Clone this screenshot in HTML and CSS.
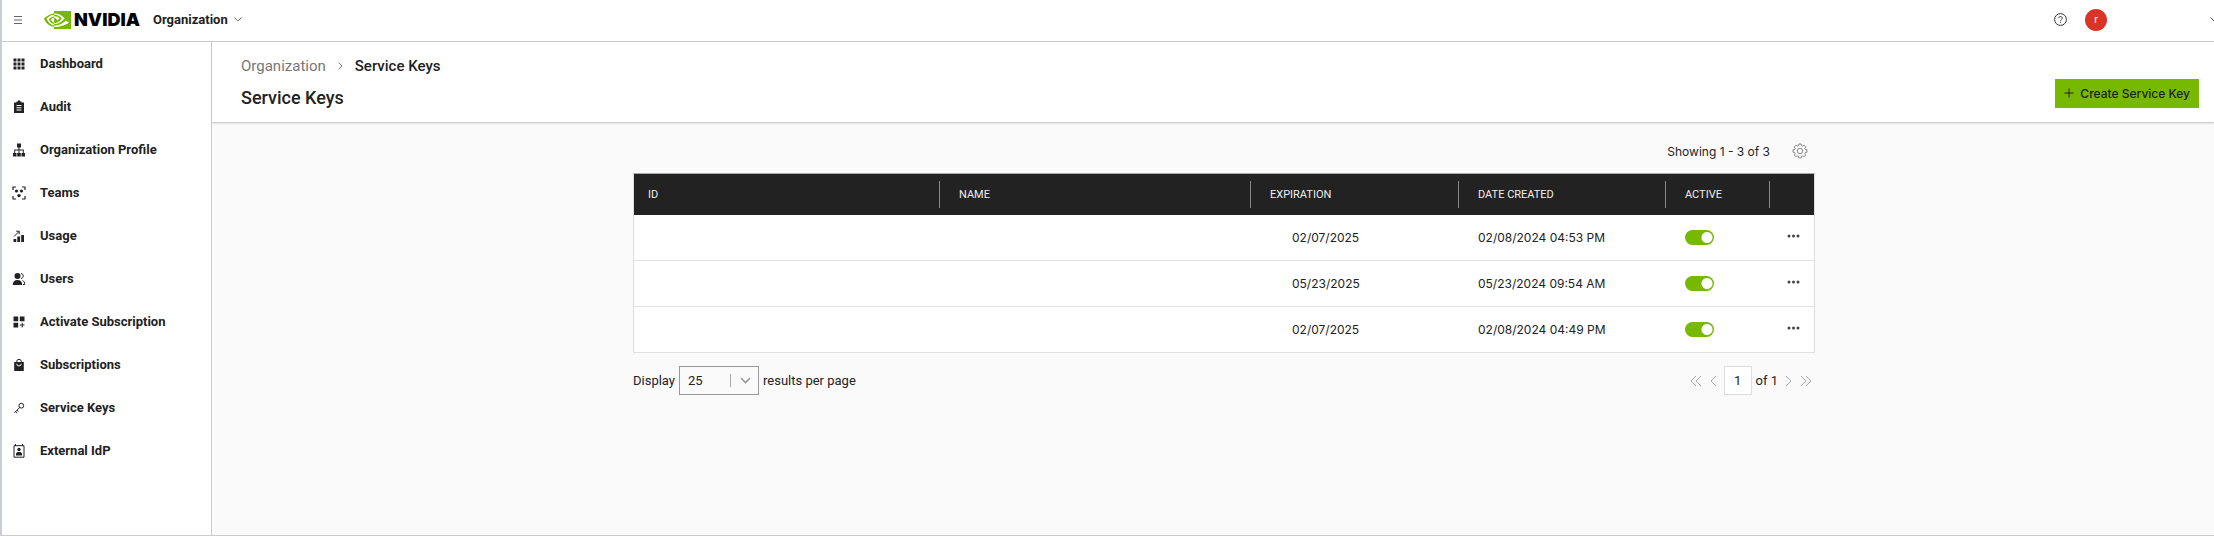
FILE: index.html
```html
<!DOCTYPE html>
<html lang="en">
<head>
<meta charset="utf-8">
<title>Service Keys</title>
<link rel="stylesheet" href="styles.css">
</head>
<body>
<div class="app">
  <header class="topbar">
    <button class="icon-btn menu-btn" type="button" aria-label="Toggle menu">
      <svg width="10" height="10" viewBox="0 0 10 10" fill="none" stroke="#666" stroke-width="1"><path d="M1 1.5h8M1 5h8M1 8.5h8"/></svg>
    </button>
    <a class="brand" href="#" aria-label="NVIDIA home">
      <svg width="27" height="18" viewBox="0 4.063 24 15.874" fill="#76b900"><path d="M8.948 8.798v-1.43a6.7 6.7 0 0 1 .424-.018c3.922-.124 6.493 3.374 6.493 3.374s-2.774 3.851-5.75 3.851c-.398 0-.787-.062-1.158-.185v-4.346c1.528.185 1.837.857 2.747 2.385l2.04-1.714s-1.492-1.952-4-1.952a6.016 6.016 0 0 0-.796.035m0-4.735v2.138l.424-.027c5.45-.185 9.01 4.47 9.01 4.47s-4.08 4.964-8.33 4.964c-.37 0-.733-.035-1.095-.097v1.325c.3.035.61.062.91.062 3.957 0 6.82-2.023 9.593-4.408.459.371 2.34 1.263 2.73 1.652-2.633 2.208-8.772 3.984-12.253 3.984-.335 0-.653-.018-.971-.053v1.864H24V4.063zm0 10.326v1.131c-3.657-.654-4.673-4.46-4.673-4.46s1.758-1.944 4.673-2.262v1.237H8.94c-1.528-.186-2.73 1.245-2.73 1.245s.68 2.412 2.739 3.11M2.456 10.9s2.164-3.197 6.5-3.533V6.201C4.153 6.59 0 10.653 0 10.653s2.35 6.802 8.948 7.42v-1.237c-4.84-.6-6.492-5.936-6.492-5.936z"/></svg>
      <span class="wordmark">NVIDIA</span>
    </a>
    <button class="org-btn" type="button">Organization
      <svg width="8" height="5" viewBox="0 0 8 5" fill="none" stroke="#777" stroke-width="1"><path d="M.5.5 4 4 7.5.5"/></svg>
    </button>
    <div class="top-actions">
      <button class="icon-btn" type="button" aria-label="Help">
        <svg width="13" height="13" viewBox="0 0 13 13" fill="none" stroke="#333" stroke-width="1"><circle cx="6.5" cy="6.5" r="5.9"/><path d="M4.8 5.2c0-1 .7-1.7 1.7-1.7s1.8.6 1.8 1.6c0 1.300-1.700 1.300-1.700 2.600M6.600 8.700v1.100"/></svg>
      </button>
      <button class="avatar" type="button">r</button>
      <button class="icon-btn account-btn" type="button" aria-label="Account menu">
        <svg width="8" height="5" viewBox="0 0 8 5" fill="none" stroke="#555" stroke-width="1"><path d="M.5.5 4 4 7.500.5"/></svg>
      </button>
    </div>
  </header>
  <div class="body">
    <nav class="sidebar">
      <a href="#"><svg viewBox="0 0 14 14"><path d="M1.500 1.500h3v3h-3zM5.500 1.500h3v3h-3zM9.500 1.500h3v3h-3zM1.500 5.500h3v3h-3zM5.500 5.500h3v3h-3zM9.500 5.500h3v3h-3zM1.500 9.500h3v3h-3zM5.500 9.500h3v3h-3zM9.500 9.500h3v3h-3z"/></svg>Dashboard</a>
      <a href="#"><svg viewBox="0 0 14 14"><path fill-rule="evenodd" d="M2 2.500h2.500V1.500h1.300a1.200 1.200 0 0 1 2.400 0h1.300v1H12V13H2zM4.500 5h5v1h-5zM4.500 7.200h5v1h-5zM4.500 9.500h5v1h-5z"/></svg>Audit</a>
      <a href="#"><svg viewBox="0 0 14 14"><path d="M5 .5h4v4H7.500v2h4.300V10H13v3.500H9.500V10h1.300V7.500H7.500V10h1.300v3.500H5.200V10h1.300V7.500H3.200V10h1.300v3.500H1V10h1.200V6.500h4.300v-2H5z"/></svg>Organization Profile</a>
      <a href="#"><svg viewBox="0 0 14 14"><path d="M1 4V1h3M10 1h3v3M13 10v3h-3M4 13H1v-3" fill="none" stroke="#222" stroke-width="1.200"/><circle cx="4.500" cy="5" r="1.600"/><circle cx="9.500" cy="5" r="1.600"/><circle cx="7" cy="9.600" r="1.700"/></svg>Teams</a>
      <a href="#"><svg viewBox="0 0 14 14"><path d="M1.500 10h2.800v3H1.500zM5.300 7.500h2.800V13H5.300zM9.200 6h2.800v7H9.200z"/><path d="M2 7.500 7 2.500M4.200 2.200h3v3" fill="none" stroke="#222"/></svg>Usage</a>
      <a href="#"><svg viewBox="0 0 14 14"><circle cx="5.500" cy="4" r="3"/><path d="M.8 13c0-3.500 1.700-5 4.700-5s4.700 1.500 4.700 5z"/><path d="M9 1.600c3 .2 3 4.400 0 4.900M10.500 8.500c1.500.5 2.200 2 2.200 4h-1.700" fill="none" stroke="#222"/></svg>Users</a>
      <a href="#"><svg viewBox="0 0 14 14"><path d="M1.500 1.500h4.700v4.700H1.500zM7.800 1.500h4.700v4.700H7.800zM1.500 7.800h4.700v4.700H1.500zM9.700 7.800h1v1.800h1.800v1h-1.800v1.900h-1v-1.900H7.800v-1h1.900z"/></svg>Activate Subscription</a>
      <a href="#"><svg viewBox="0 0 14 14"><path d="M2.200 4h9.600v9H2.200z"/><path d="M4.700 4.500V3.600a2.300 2.300 0 0 1 4.600 0v.9" fill="none" stroke="#222"/><path d="M4.800 5.800a2.200 2.200 0 0 0 4.400 0" fill="none" stroke="#fff"/></svg>Subscriptions</a>
      <a href="#"><svg viewBox="0 0 14 14"><path d="M7.800 6.400 2.500 11.700M3.500 10.700l1.700 1.500M5 9.200l1.400 1.300" fill="none" stroke="#222"/><circle cx="9.300" cy="4.700" r="2.400" fill="none" stroke="#222"/></svg>Service Keys</a>
      <a href="#"><svg viewBox="0 0 14 14"><path d="M2 1.700h10v11.500H2zM3.500 0v2M10.500 0v2" fill="none" stroke="#222"/><circle cx="7" cy="5.500" r="1.700"/><path d="M4 11.500V9.800C4 8.500 5.500 8 7 8s3 .5 3 1.800v1.700z"/></svg>External IdP</a>
    </nav>
    <main class="main">
      <div class="page-head">
        <div>
          <div class="crumbs">
            <a href="#">Organization</a>
            <svg width="5" height="8" viewBox="0 0 5 8" fill="none" stroke="#777"><path d="M.7.7 4 4 .7 7.300"/></svg>
            <span>Service Keys</span>
          </div>
          <h1>Service Keys</h1>
        </div>
        <button class="create-btn" type="button">
          <svg width="10" height="10" viewBox="0 0 10 10" fill="none" stroke="#222"><path d="M5 .5v9M.5 5h9"/></svg>
          Create Service Key
        </button>
      </div>
      <div class="content">
        <div class="toolbar">
          <span>Showing 1 - 3 of 3</span>
          <button class="icon-btn" type="button" aria-label="Table settings">
            <svg width="16" height="16" viewBox="0 0 16 16" fill="none" stroke="#888" stroke-width="1"><circle cx="8" cy="8" r="2.700"/><path d="M6.800 1h2.400l.3 1.700 1.200.5 1.400-1 1.700 1.700-1 1.400.5 1.200 1.700.3v2.400l-1.700.3-.5 1.200 1 1.400-1.700 1.700-1.400-1-1.200.5-.3 1.700H6.800l-.3-1.700-1.200-.5-1.400 1-1.700-1.700 1-1.400-.5-1.200L1 9.200V6.800l1.700-.3.5-1.200-1-1.400 1.700-1.700 1.400 1 1.200-.5z"/></svg>
          </button>
        </div>
        <table class="keys">
          <colgroup><col class="c-id"><col class="c-name"><col class="c-exp"><col class="c-date"><col class="c-active"><col class="c-more"></colgroup>
          <thead>
            <tr><th>ID</th><th>NAME</th><th>EXPIRATION</th><th>DATE CREATED</th><th>ACTIVE</th><th></th></tr>
          </thead>
          <tbody>
            <tr><td></td><td></td><td class="exp">02/07/2025</td><td>02/08/2024 04:53 PM</td><td><input class="toggle" type="checkbox" checked aria-label="Active, key 1"></td><td class="more"><button class="icon-btn" type="button" aria-label="Actions, key 1"><svg width="13" height="4" viewBox="0 0 13 4" fill="#444"><circle cx="2" cy="2" r="1.500"/><circle cx="6.500" cy="2" r="1.500"/><circle cx="11" cy="2" r="1.500"/></svg></button></td></tr>
            <tr><td></td><td></td><td class="exp">05/23/2025</td><td>05/23/2024 09:54 AM</td><td><input class="toggle" type="checkbox" checked aria-label="Active, key 2"></td><td class="more"><button class="icon-btn" type="button" aria-label="Actions, key 2"><svg width="13" height="4" viewBox="0 0 13 4" fill="#444"><circle cx="2" cy="2" r="1.500"/><circle cx="6.500" cy="2" r="1.500"/><circle cx="11" cy="2" r="1.500"/></svg></button></td></tr>
            <tr><td></td><td></td><td class="exp">02/07/2025</td><td>02/08/2024 04:49 PM</td><td><input class="toggle" type="checkbox" checked aria-label="Active, key 3"></td><td class="more"><button class="icon-btn" type="button" aria-label="Actions, key 3"><svg width="13" height="4" viewBox="0 0 13 4" fill="#444"><circle cx="2" cy="2" r="1.500"/><circle cx="6.500" cy="2" r="1.500"/><circle cx="11" cy="2" r="1.500"/></svg></button></td></tr>
          </tbody>
        </table>
        <div class="table-foot">
          <div class="page-size">
            <label for="size">Display</label>
            <div class="select-box">
              <select id="size"><option>25</option><option>50</option><option>100</option></select>
              <svg width="22" height="13" viewBox="0 0 22 13" fill="none"><path d="M.5 0v13" stroke="#aaa"/><path d="m11 4 4.500 4.500L20 4" stroke="#999" stroke-width="1.600"/></svg>
            </div>
            <span>results per page</span>
          </div>
          <div class="pager">
            <button class="icon-btn" type="button" aria-label="First page"><svg width="12" height="12" viewBox="0 0 12 12"><path d="M6 1 1 6l5 5M11 1 6 6l5 5"/></svg></button>
            <button class="icon-btn" type="button" aria-label="Previous page"><svg width="8" height="12" viewBox="0 0 8 12"><path d="M7 1 2 6l5 5"/></svg></button>
            <div class="page-num"><input id="page" type="text" value="1" aria-label="Page"><label for="page">of 1</label></div>
            <button class="icon-btn" type="button" aria-label="Next page"><svg width="8" height="12" viewBox="0 0 8 12"><path d="m1 1 5 5-5 5"/></svg></button>
            <button class="icon-btn" type="button" aria-label="Last page"><svg width="12" height="12" viewBox="0 0 12 12"><path d="m1 1 5 5-5 5M6 1l5 5-5 5"/></svg></button>
          </div>
        </div>
      </div>
    </main>
  </div>
</div>
</body>
</html>
```
FILE: styles.css
```css
* { box-sizing: border-box; }

body {
  margin: 0;
  background: #fff;
  color: #222;
  font-family: Roboto, "Liberation Sans", sans-serif;
  font-size: 13px;
}

button, input, select { font: inherit; color: inherit; }
a { color: inherit; text-decoration: none; }
svg { display: block; flex: none; }

.app {
  min-height: 100vh;
  display: flex;
  flex-direction: column;
  border-left: 2px solid #c9ced5;
  border-bottom: 1px solid #ccc;
}

.icon-btn {
  display: flex;
  padding: 0;
  border: 0;
  background: none;
}

.topbar {
  height: 42px;
  display: flex;
  align-items: center;
  padding-left: 11px;
  padding-bottom: 2px;
  border-bottom: 1px solid #ccc;
  overflow: hidden;
}

.brand {
  display: flex;
  align-items: center;
  gap: 3px;
  margin-left: 21px;
}

.wordmark {
  font-family: Inter, sans-serif;
  font-weight: 900;
  font-size: 18px;
  line-height: 18px;
  color: #000;
}

.org-btn {
  display: flex;
  align-items: center;
  gap: 6px;
  margin-left: 13px;
  padding: 0;
  border: 0;
  background: none;
  font-weight: 700;
}

.top-actions {
  display: flex;
  align-items: center;
  margin-left: auto;
}

.avatar {
  width: 22px;
  height: 22px;
  margin: 0 103px 0 18px;
  padding: 0;
  border: 0;
  border-radius: 50%;
  background: #dc3327;
  color: #fff;
  font-size: 11px;
  line-height: 22px;
}

.account-btn { margin-right: -4px; }

.body { flex: 1; display: flex; }

.sidebar {
  width: 210px;
  flex: none;
  border-right: 1px solid #ccc;
}

.sidebar a {
  display: flex;
  align-items: center;
  gap: 14px;
  height: 43px;
  padding-left: 10px;
  font-weight: 700;
}

.sidebar svg { width: 14px; height: 14px; fill: #222; }

.main { flex: 1; background: #fafafa; }

.page-head {
  display: flex;
  justify-content: space-between;
  align-items: center;
  height: 80px;
  padding: 2px 15px 0 29px;
  background: #fff;
  box-shadow: 0 1px 2px #bbb;
}

.crumbs {
  display: flex;
  align-items: center;
  gap: 12px;
  font-size: 15px;
  line-height: 20px;
}

.crumbs a { color: #777; }
.crumbs span { font-weight: 500; }

h1 {
  margin: 10px 0 0;
  font-size: 18px;
  line-height: 24px;
  font-weight: 500;
}

.create-btn {
  display: flex;
  align-items: center;
  gap: 6px;
  height: 29px;
  margin-top: 20px;
  padding: 0 9px;
  border: 0;
  background: #76b900;
  font-family: Inter, sans-serif;
  font-size: 12px;
  font-weight: 500;
}

.content {
  max-width: 1204px;
  margin: 0 auto;
  padding: 18px 0 0 22px;
}

.toolbar {
  display: flex;
  justify-content: flex-end;
  align-items: center;
  gap: 22px;
  height: 22px;
  margin-bottom: 11px;
  padding-right: 7px;
  font-family: Inter, sans-serif;
  font-size: 12px;
}

.keys {
  width: 100%;
  table-layout: fixed;
  border-spacing: 0;
  border: 1px solid #ddd;
  border-top: 1px solid #aaa;
  border-bottom: 0;
  background: #fff;
}

.c-id { width: 305px; }
.c-name { width: 311px; }
.c-exp { width: 208px; }
.c-date { width: 207px; }
.c-active { width: 104px; }
.c-more { width: 45px; }

.keys th {
  height: 41px;
  padding: 0 20px;
  background: #222 linear-gradient(#888, #888) 0 50% / 1px 27px no-repeat;
  color: #eee;
  font-size: 11px;
  font-weight: 400;
  text-align: left;
}

.keys th:first-child { padding-left: 14px; background-image: none; }

.keys td {
  height: 46px;
  padding: 0 20px;
  border-bottom: 1px solid #e2e2e2;
  font-family: Inter, sans-serif;
  font-size: 12px;
}

.keys .exp { padding-left: 42px; }
.keys .more { padding: 0 0 4px 18px; }

.toggle {
  appearance: none;
  display: block;
  width: 29px;
  height: 15px;
  margin: 0;
  border-radius: 8px;
  background: radial-gradient(circle at 22px 50%, #fff 5px, transparent 6px) #76b900;
}

.table-foot {
  display: flex;
  justify-content: space-between;
  align-items: center;
  margin-top: 13px;
}

.page-size, .pager, .page-num { display: flex; align-items: center; }
.page-size { gap: 4px; }
.pager { gap: 7px; padding-right: 3px; }
.page-num { gap: 4px; }

.select-box { display: grid; align-items: center; }
.select-box > * { grid-area: 1 / 1; }
.select-box svg { justify-self: end; margin-right: 7px; pointer-events: none; }

.select-box select {
  appearance: none;
  width: 80px;
  height: 29px;
  padding: 0 8px;
  border: 1px solid #999;
  border-radius: 0;
  background: #fafafa;
}

.page-num input {
  width: 28px;
  height: 29px;
  padding: 0;
  border: 1px solid #ddd;
  background: #fff;
  text-align: center;
}

.pager svg { fill: none; stroke: #aaa; }
```
